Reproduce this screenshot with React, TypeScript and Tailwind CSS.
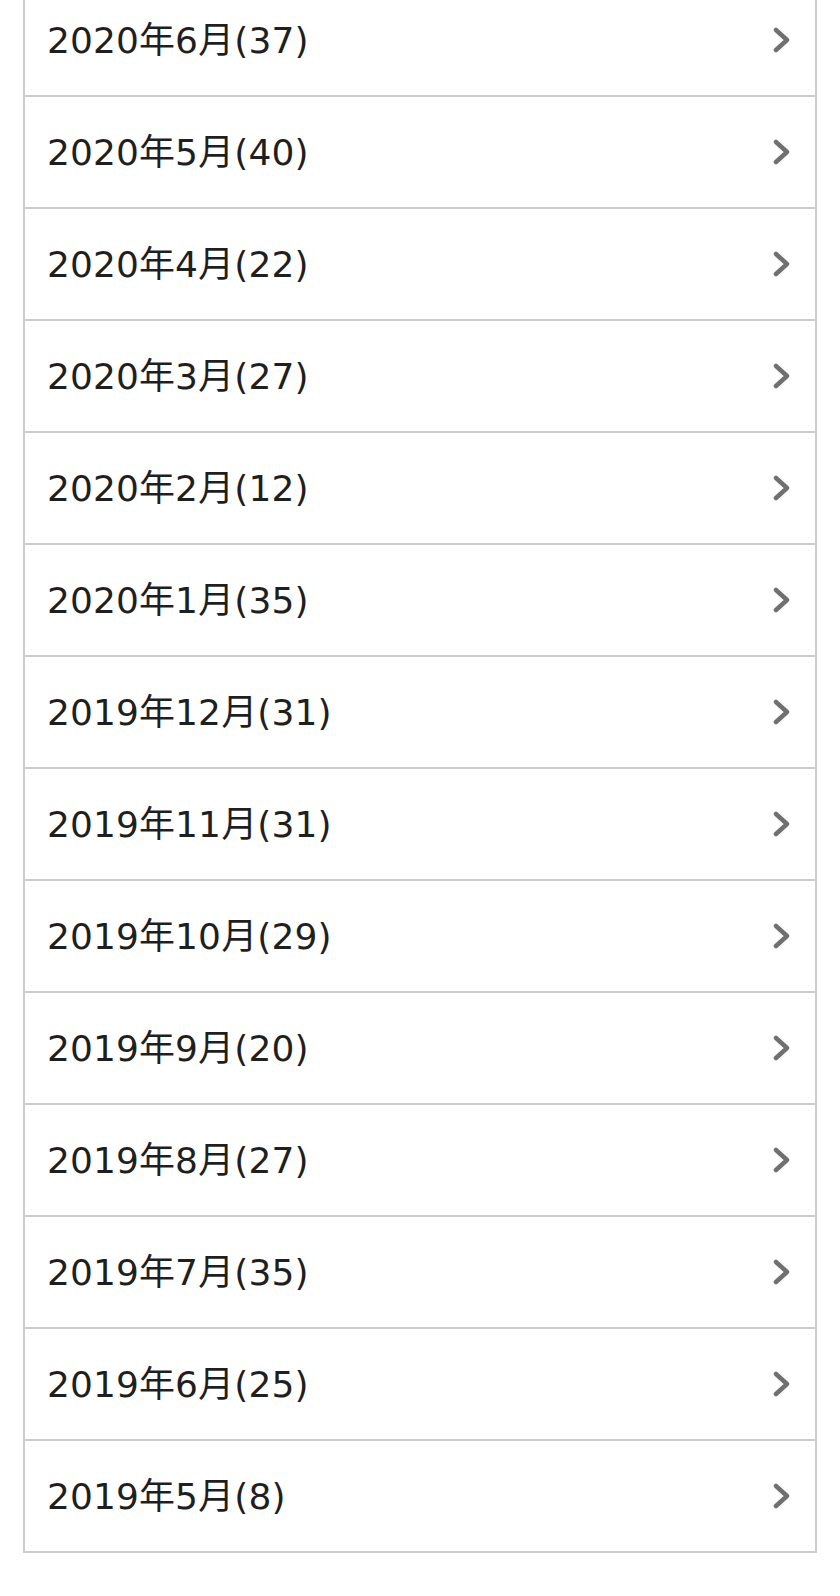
import React from "react";

interface Month {
  label: string;
  count: number;
}

const months: Month[] = [
  { label: "2020年6月", count: 37 },
  { label: "2020年5月", count: 40 },
  { label: "2020年4月", count: 22 },
  { label: "2020年3月", count: 27 },
  { label: "2020年2月", count: 12 },
  { label: "2020年1月", count: 35 },
  { label: "2019年12月", count: 31 },
  { label: "2019年11月", count: 31 },
  { label: "2019年10月", count: 29 },
  { label: "2019年9月", count: 20 },
  { label: "2019年8月", count: 27 },
  { label: "2019年7月", count: 35 },
  { label: "2019年6月", count: 25 },
  { label: "2019年5月", count: 8 },
];

const Chevron = () => (
  <svg width="18" height="26" viewBox="0 0 18 26" fill="none">
    <path
      d="M3 3 L14 13 L3 23"
      stroke="#707070"
      strokeWidth="4.5"
      strokeLinecap="round"
      strokeLinejoin="round"
    />
  </svg>
);

const App = () => {
  return (
    <div
      className="w-[840px] min-h-[1596px] bg-white overflow-hidden"
      style={{ fontFamily: '"DejaVu Sans", "Noto Sans CJK JP", sans-serif' }}
    >
      {/* archive list */}
      <ul className="mt-[-17px] ml-[23px] w-[794px] border-x-2 border-b-2 border-[#cccccc]">
        {months.map((m) => (
          <li
            key={m.label}
            className="h-[112px] border-t-2 border-[#cccccc] flex items-center justify-between pl-[22px] pr-[24px]"
          >
            <span className="text-[36px] leading-none text-[#1f1f1f] tracking-[0.1px] pt-[2px]">
              {m.label}({m.count})
            </span>
            <Chevron />
          </li>
        ))}
      </ul>
    </div>
  );
};

export default App;
